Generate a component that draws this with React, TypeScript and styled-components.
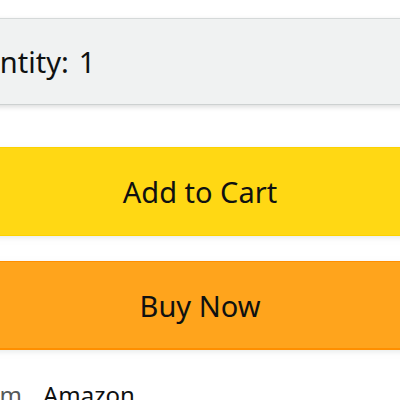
import * as React from 'react';
import styled, { createGlobalStyle } from 'styled-components';

const GlobalStyle = createGlobalStyle`
  html, body {
    margin: 0;
    padding: 0;
    background: #fff;
    overflow: hidden;
  }
  body {
    font-family: "Noto Sans", "Open Sans", Arial, sans-serif;
    color: #0f1111;
  }
`;

const Page = styled.div`
  display: flex;
  flex-direction: column;
  margin: 18px -70px 0 -70px;
`;

const QuantityBox = styled.div`
  display: flex;
  align-items: center;
  height: 85px;
  padding-left: 13px;
  background: #f0f2f2;
  border-top: 1px solid #d5d9d9;
  border-bottom: 1px solid #cdd1d1;
  box-shadow: 0 2px 5px rgba(15, 17, 17, 0.15);
  font-size: 29px;
  margin-bottom: 42px;
`;

const QuantityLabel = styled.span`
  margin-right: 10px;
`;

const ActionButton = styled.button<{ $variant: 'cart' | 'buy' }>`
  display: flex;
  align-items: center;
  justify-content: center;
  box-sizing: border-box;
  height: 89px;
  width: 100%;
  padding: 0;
  border: none;
  border-top: 1px solid ${p => (p.$variant === 'cart' ? '#fcd200' : '#ff8f00')};
  border-bottom: ${p => (p.$variant === 'cart' ? '1px solid #fcd200' : '2px solid #ff8f00')};
  background: ${p => (p.$variant === 'cart' ? '#ffd814' : '#ffa41c')};
  box-shadow: 0 2px 5px rgba(213, 217, 217, 0.5);
  color: #0f1111;
  font-family: inherit;
  font-size: 29px;
  margin-bottom: ${p => (p.$variant === 'cart' ? '25px' : '0')};
`;

const InfoTable = styled.div`
  display: grid;
  grid-template-columns: 92px auto;
  column-gap: 21px;
  margin-top: 28px;
  font-size: 24px;
`;

const InfoLabel = styled.span`
  text-align: right;
  color: #565959;
  white-space: nowrap;
  direction: rtl;
  overflow: hidden;
`;

const InfoValue = styled.span``;

export default function App() {
  return (
    <>
      <GlobalStyle />
      <Page>
        <QuantityBox>
          <QuantityLabel>Quantity:</QuantityLabel>
          <span>1</span>
        </QuantityBox>
        <ActionButton $variant="cart">Add to Cart</ActionButton>
        <ActionButton $variant="buy">Buy Now</ActionButton>
        <InfoTable>
          <InfoLabel>Ships from</InfoLabel>
          <InfoValue>Amazon</InfoValue>
        </InfoTable>
      </Page>
    </>
  );
}
